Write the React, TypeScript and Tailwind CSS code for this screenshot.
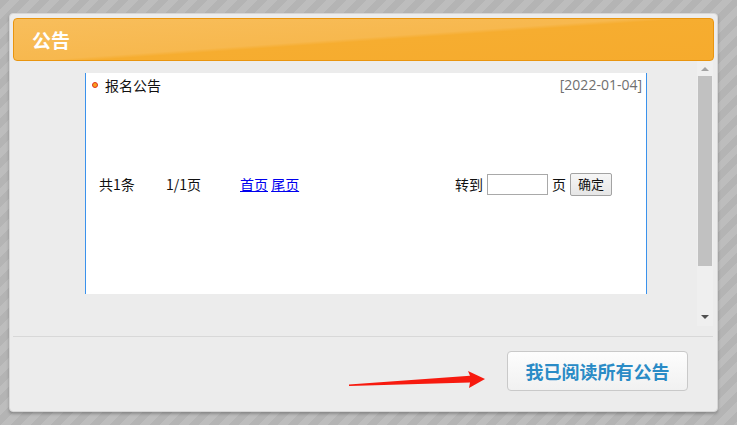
import React from "react";

export default function App() {
  return (
    <div
      className="relative w-[737px] h-[425px] overflow-hidden pt-[13px] pl-[9px] bg-[repeating-linear-gradient(135deg,#b4b4b4_0px,#b4b4b4_7px,#bdbdbd_7px,#bdbdbd_14px)]"
      style={{ fontFamily: '"Microsoft YaHei","Noto Sans CJK SC",sans-serif' }}
    >
      <div className="w-[709px] h-[399px] bg-[#ececec] border border-[#d6d6d6] rounded-[4px] shadow-[0_2px_3px_rgba(0,0,0,0.25)] pt-[4px] px-[3px] flex flex-col">
        {/* header */}
        <div className="h-[43px] rounded-[4px] border border-[#e9950f] bg-[linear-gradient(176deg,#f8be5c_0%,#f7b84e_48%,#f6ad30_52%,#f6ab2d_100%)] flex items-center pl-[18px]">
          <span className="text-white font-bold text-[19px] leading-none">公告</span>
        </div>
        {/* scroll region */}
        <div className="h-[265px] flex">
          <div className="flex-1 pl-[72px] pt-[12px]">
            <div className="w-[562px] h-[221px] bg-white border-l border-r border-[#3a92ec] flex flex-col text-[14px] text-[#111]">
              <div className="flex items-center justify-between pl-[6px] pr-[4px] pt-[2px] leading-[20px]">
                <div className="flex items-center">
                  <span className="w-[6px] h-[6px] rounded-full bg-[#f9a01b] border border-[#e0301e] mr-[7px]" />
                  <span>报名公告</span>
                </div>
                <span
                  className="text-[#6f6f6f] text-[14px]"
                  style={{ fontFamily: '"Open Sans","Noto Sans",sans-serif' }}
                >
                  [2022-01-04]
                </span>
              </div>
              <div className="mt-[77px] h-[24px] flex items-center pl-[13px]">
                <span className="w-[67px]">共1条</span>
                <span className="w-[74px]">1/1页</span>
                <span className="w-[215px]">
                  <a className="text-[#0000ee] underline cursor-pointer">首页</a>{" "}
                  <a className="text-[#0000ee] underline cursor-pointer">尾页</a>
                </span>
                <span>转到</span>
                <span className="ml-[4px] w-[61px] h-[21px] border border-[#a9a9a9] bg-white" />
                <span className="ml-[4px]">页</span>
                <span className="ml-[4px] w-[42px] h-[23px] border border-[#a3a3a3] rounded-[2px] bg-[linear-gradient(#f6f6f6,#e6e6e6)] flex items-center justify-center text-[13px]">
                  确定
                </span>
              </div>
            </div>
          </div>
          {/* scrollbar */}
          <div className="w-[16px] mr-[1px] bg-[#efefef] flex flex-col items-center">
            <div className="h-[15px] flex items-center justify-center">
              <div className="w-0 h-0 border-l-[4px] border-r-[4px] border-b-[4px] border-l-transparent border-r-transparent border-b-[#a3a3a3]" />
            </div>
            <div className="w-[14px] h-[190px] bg-[#c1c1c1]" />
            <div className="flex-1" />
            <div className="h-[15px] flex items-center justify-center mb-[2px]">
              <div className="w-0 h-0 border-l-[4px] border-r-[4px] border-t-[4px] border-l-transparent border-r-transparent border-t-[#505050]" />
            </div>
          </div>
        </div>
        {/* footer */}
        <div className="mt-[10px] border-t border-[#d8d8d8] mr-[1px] flex justify-end pr-[25px]">
          <div className="mt-[14px] w-[181px] h-[40px] border border-[#c9c9c9] rounded-[4px] bg-[linear-gradient(#fdfdfd,#f1f1f1)] flex items-center justify-center">
            <span className="text-[#2a8bc6] font-bold text-[18px]">我已阅读所有公告</span>
          </div>
        </div>
      </div>
      <svg className="absolute left-0 top-0" width="737" height="425" viewBox="0 0 737 425">
        <polygon
          points="349,384.5 470,375.8 468,371 485,379 469,388 470,382.5 349,386"
          fill="#f71a0f"
        />
      </svg>
    </div>
  );
}
